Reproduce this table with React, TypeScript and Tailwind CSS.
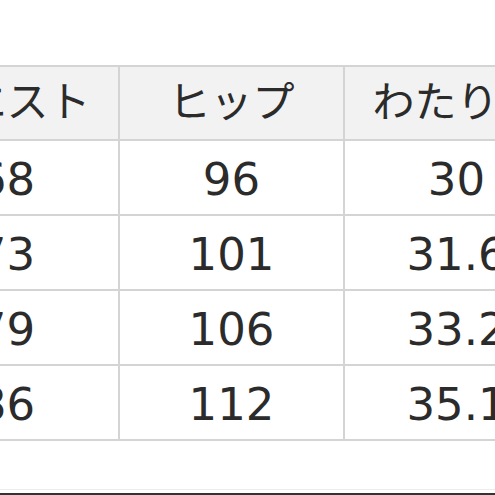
import React from "react";

const headers = ["ウエスト", "ヒップ", "わたり幅"];
const rows = [
  ["68", "96", "30"],
  ["73", "101", "31.6"],
  ["79", "106", "33.2"],
  ["86", "112", "35.1"],
];

export default function App() {
  return (
    <div
      className="w-[495px] h-[495px] overflow-hidden bg-white flex flex-col text-[#2b2b2b]"
      style={{ fontFamily: '"DejaVu Sans", "Noto Sans CJK JP", sans-serif' }}
    >
      <div className="pt-[65px] ml-[-107px] w-[700px] shrink-0">
        <table className="border-collapse table-fixed w-[677px]">
          <thead>
            <tr>
              {headers.map((h) => (
                <th
                  key={h}
                  className="w-[225px] h-[74px] border-2 border-[#d4d4d4] bg-[#f2f2f2] text-[42px] font-normal text-center leading-none p-0 whitespace-nowrap"
                >
                  {h}
                </th>
              ))}
            </tr>
          </thead>
          <tbody>
            {rows.map((r, i) => (
              <tr key={i}>
                {r.map((c, j) => (
                  <td
                    key={j}
                    className="w-[225px] h-[75px] border-2 border-[#d4d4d4] text-[45px] text-center leading-none p-0 pt-[3px] whitespace-nowrap"
                  >
                    {c}
                  </td>
                ))}
              </tr>
            ))}
          </tbody>
        </table>
      </div>
      <div className="flex-1" />
      <div className="h-px bg-[#ececec]" />
      <div className="h-[3px]" />
      <div className="h-[2px] bg-[#333333]" />
    </div>
  );
}
